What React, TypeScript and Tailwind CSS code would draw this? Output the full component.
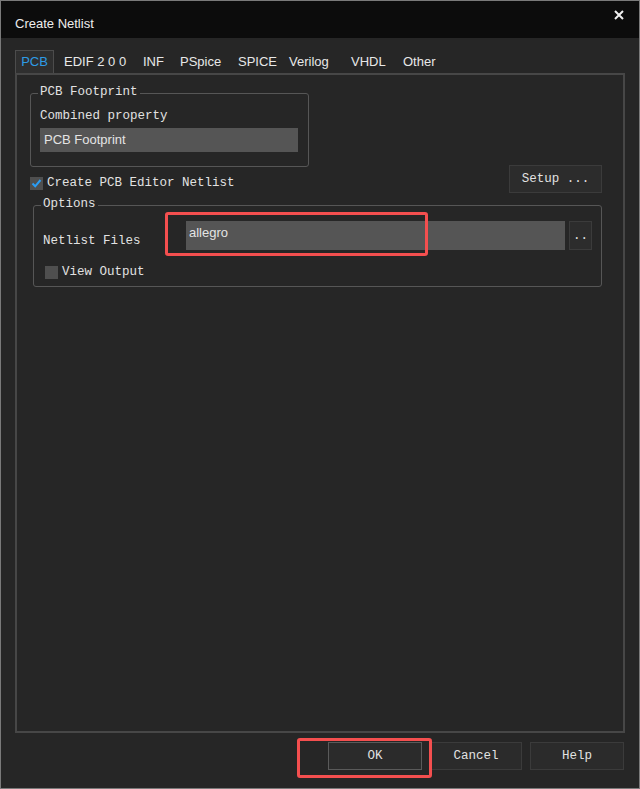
export default function App() {
  const mono = "font-['Liberation_Mono',monospace] text-[12.5px] leading-[14px] text-[#e2e2e2] whitespace-pre";
  const tabCls = "text-[13px] text-[#e8e8e8] leading-[16px] flex items-center";
  const Check = ({ checked }: { checked?: boolean }) => (
    <div className="w-[13px] h-[13px] bg-[#4f4f4f] flex items-center justify-center shrink-0">
      {checked && (
        <svg width="11" height="11" viewBox="0 0 11 11">
          <path d="M1.5 5.5 L4.2 8.3 L9.5 2" fill="none" stroke="#2a9df4" strokeWidth="2" />
        </svg>
      )}
    </div>
  );
  return (
    <div className="w-[640px] h-[789px] border border-[#7a7a7a] bg-[#262626] flex flex-col font-['Liberation_Sans',Arial,sans-serif] overflow-hidden">
      <div className="h-[37px] bg-[#0c0c0c] flex justify-between shrink-0">
        <div className="pl-[14px] pt-[15px] text-[13px] leading-[16px] text-[#ececec]">Create Netlist</div>
        <div className="pr-[15px] pt-[9px]">
          <svg width="10" height="10" viewBox="0 0 10 10">
            <path d="M1 1 L9 9 M9 1 L1 9" stroke="#f0f0f0" strokeWidth="2" />
          </svg>
        </div>
      </div>
      <div className="px-[14px] pt-[12px] flex flex-col">
        <div className="h-[23px] flex items-stretch">
          <div className="w-[39px] bg-[#2f2f2f] border border-b-0 border-[#4c4c4c] flex items-center justify-center text-[13px] leading-[16px] text-[#2e9be6]">
            PCB
          </div>
          <div className="w-[10px]" />
          <div className={`${tabCls} w-[79px]`}>EDIF 2 0 0</div>
          <div className={`${tabCls} w-[37px]`}>INF</div>
          <div className={`${tabCls} w-[58px]`}>PSpice</div>
          <div className={`${tabCls} w-[51px]`}>SPICE</div>
          <div className={`${tabCls} w-[62px]`}>Verilog</div>
          <div className={`${tabCls} w-[52px]`}>VHDL</div>
          <div className={tabCls}>Other</div>
        </div>
        <div className="h-[660px] border-2 border-[#474747] flex flex-col">
          <div className="relative ml-[13px] mt-[18px] w-[279px] h-[74px] border border-[#565656] rounded-[3px] pl-[9px] pt-[15px]">
            <span className={`absolute left-[7px] top-[-9px] bg-[#262626] px-[2px] ${mono}`}>PCB Footprint</span>
            <div className={mono}>Combined property</div>
            <div className="mt-[5px] w-[258px] h-[24px] bg-[#555555] pl-[4px] flex items-center text-[13px] leading-[16px] text-[#e4e4e4]">
              PCB Footprint
            </div>
          </div>
          <div className="mt-[-2px] h-[28px] flex items-start justify-between pl-[13px] pr-[21px]">
            <div className="mt-[11px] flex items-center gap-[4px]">
              <Check checked />
              <span className={mono}>Create PCB Editor Netlist</span>
            </div>
            <div className="w-[93px] h-[28px] bg-[#2c2c2c] border border-[#3b3b3b] flex items-center justify-center">
              <span className={mono}>Setup ...</span>
            </div>
          </div>
          <div className="relative ml-[16px] mt-[12px] w-[569px] h-[82px] border border-[#565656] rounded-[3px] pt-[15px]">
            <span className={`absolute left-[7px] top-[-9px] bg-[#262626] px-[2px] ${mono}`}>Options</span>
            <div className="flex items-start pl-[9px]">
              <div className={`w-[143px] mt-[13px] ${mono}`}>Netlist Files</div>
              <div className="w-[379px] h-[29px] bg-[#555555] pl-[3px] pt-[4px] text-[13px] leading-[16px] text-[#e4e4e4]">
                allegro
              </div>
              <div className="ml-[4px] w-[23px] h-[29px] bg-[#2c2c2c] border border-[#3b3b3b] flex items-center justify-center">
                <span className={mono}>..</span>
              </div>
            </div>
            <div className="mt-[15px] pl-[11px] flex items-center gap-[4px]">
              <Check />
              <span className={mono}>View Output</span>
            </div>
            <div className="absolute left-[131px] top-[6px] w-[263px] h-[44px] border-[3px] border-[#f44f4f] rounded-[3px]" />
          </div>
        </div>
        <div className="mt-[9px] mr-[1px] flex justify-end gap-[8px]">
          <div className="relative w-[94px] h-[28px] bg-[#2b2b2b] border border-[#5a5a5a] flex items-center justify-center">
            <span className={mono}>OK</span>
            <div className="absolute left-[-32px] top-[-5px] w-[135px] h-[40px] border-[3px] border-[#f44f4f] rounded-[3px]" />
          </div>
          <div className="w-[92px] h-[28px] bg-[#2b2b2b] border border-[#3b3b3b] flex items-center justify-center">
            <span className={mono}>Cancel</span>
          </div>
          <div className="w-[94px] h-[28px] bg-[#2b2b2b] border border-[#3b3b3b] flex items-center justify-center">
            <span className={mono}>Help</span>
          </div>
        </div>
      </div>
    </div>
  );
}
